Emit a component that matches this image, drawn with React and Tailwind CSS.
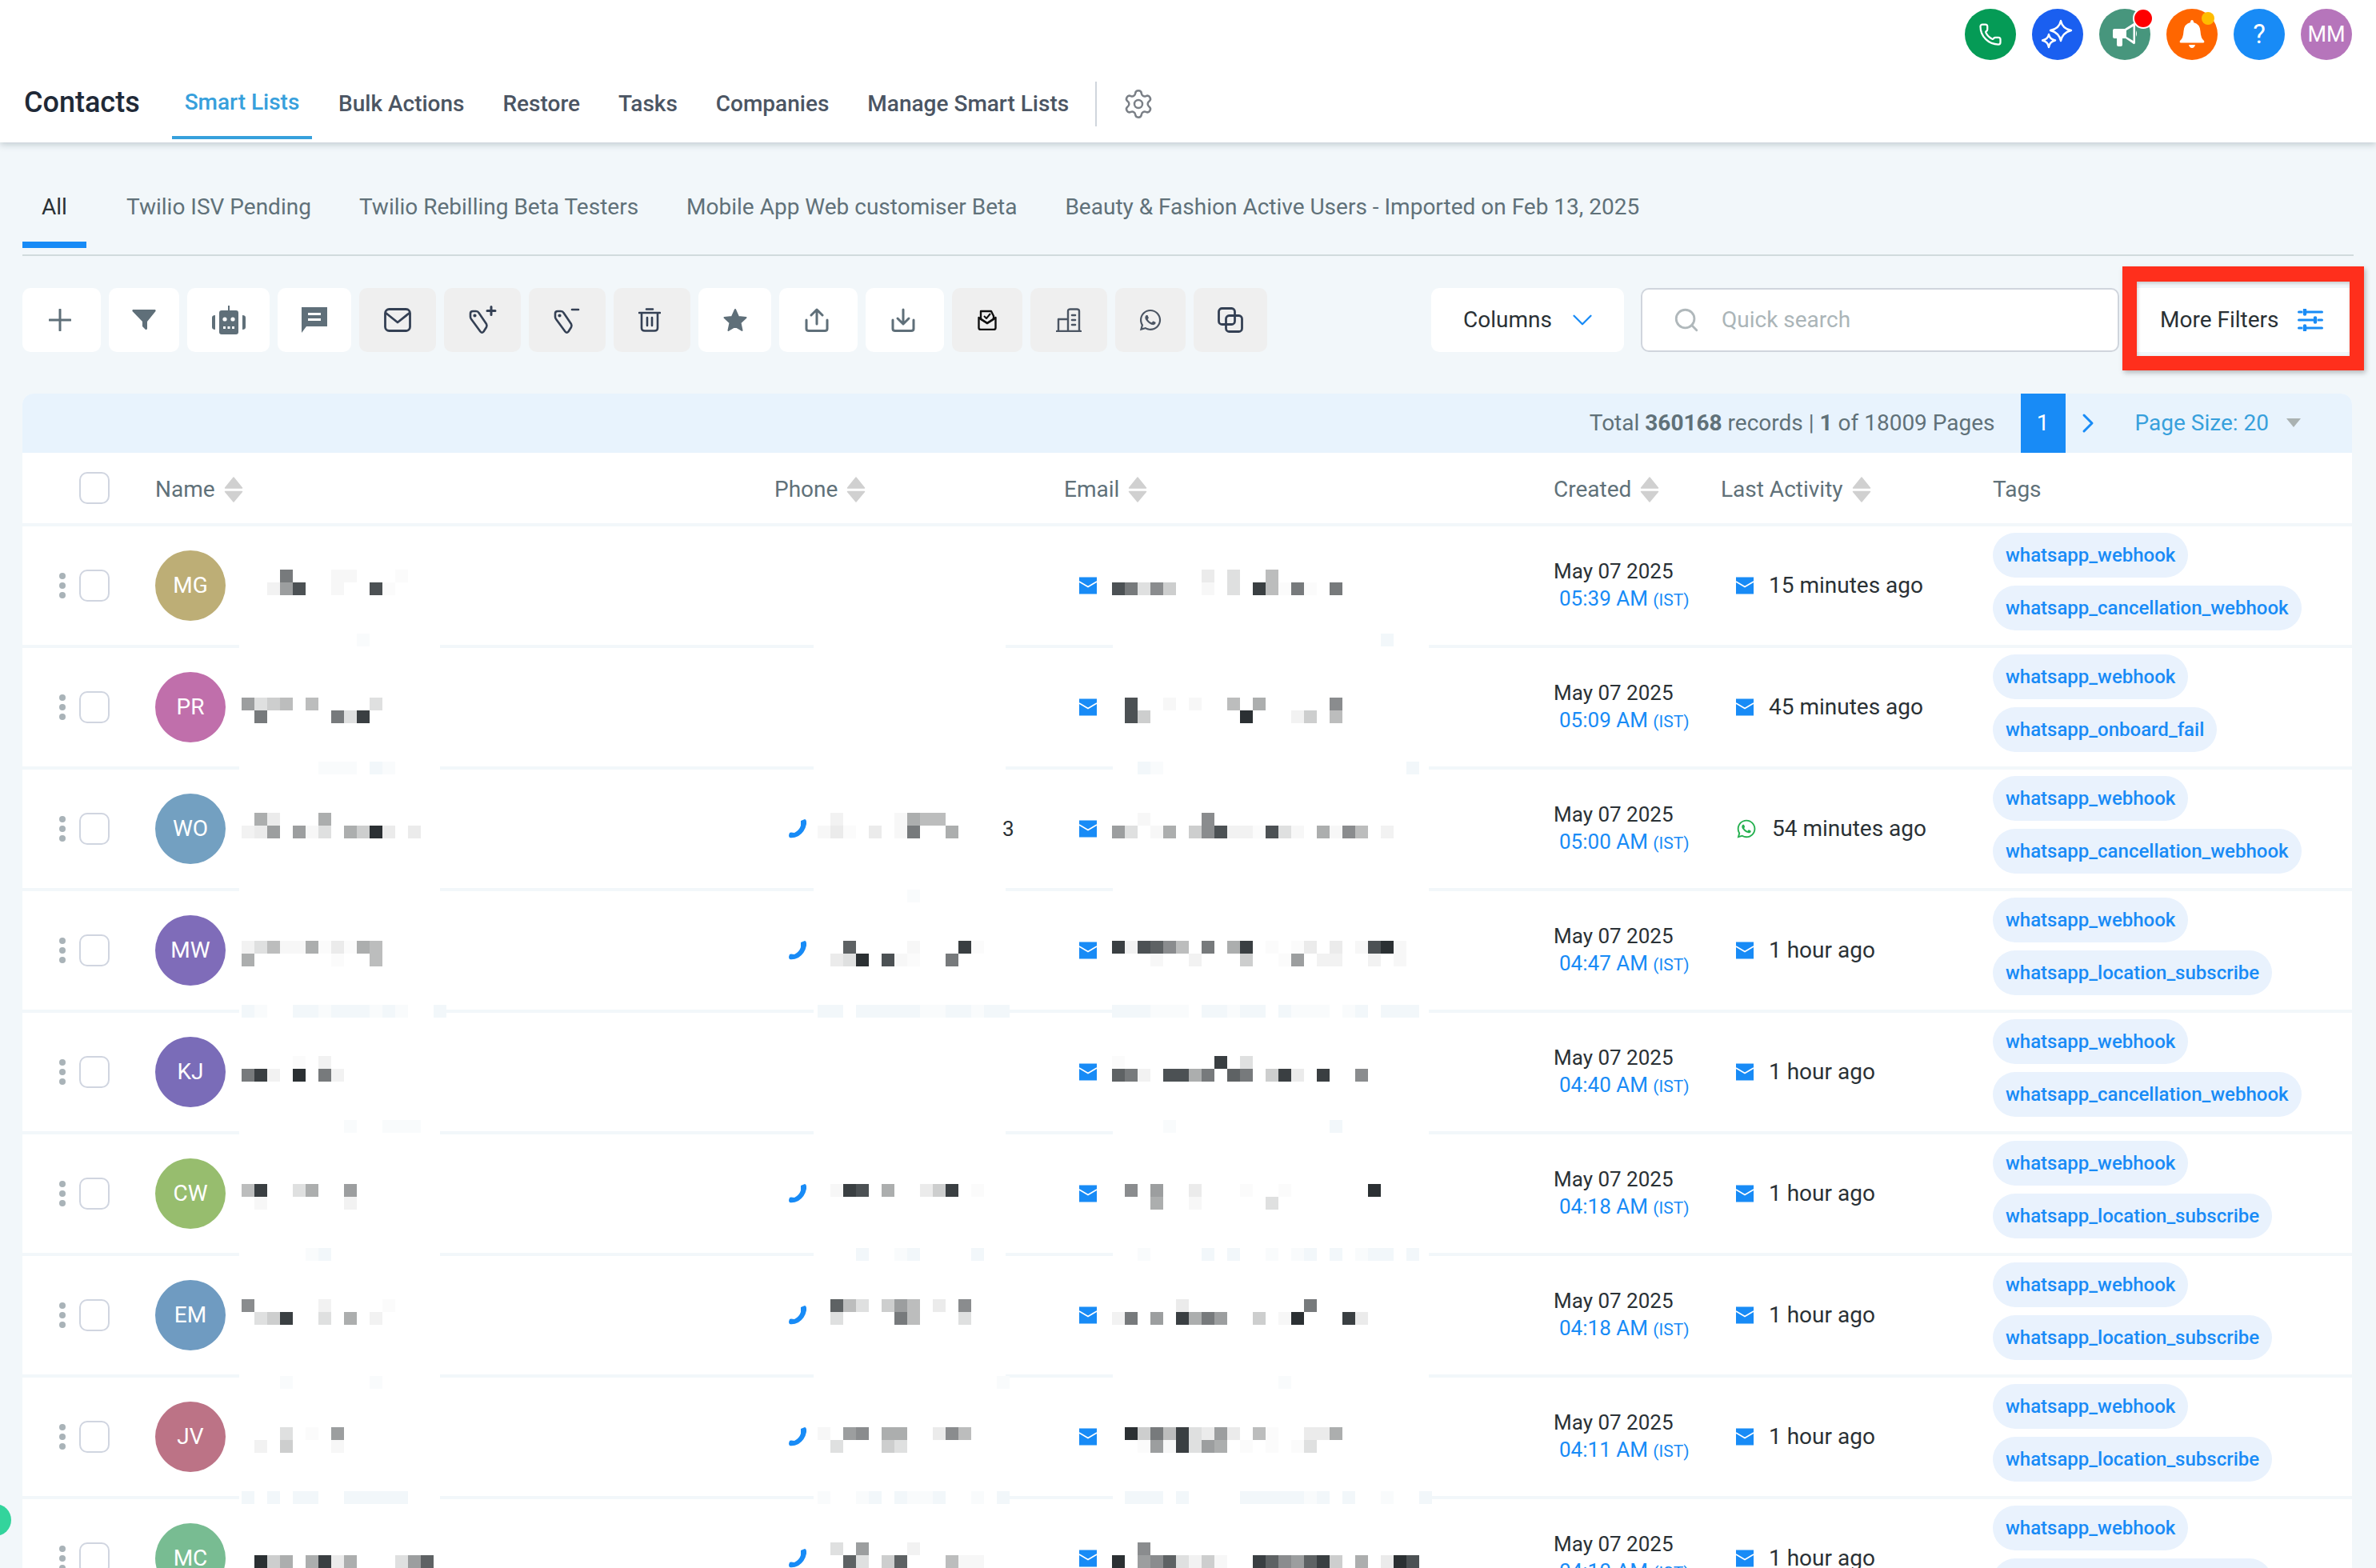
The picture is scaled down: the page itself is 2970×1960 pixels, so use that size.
import React from "react";
import { Phone, Settings, ChevronDown, ChevronRight, Search } from "lucide-react";
import { FaWhatsapp } from "react-icons/fa";

const G = { 0: "#2b3033", 1: "#3a3f42", 2: "#4c5154", 3: "#5e6264", 4: "#777a7c", 5: "#8a8c8e", 6: "#9c9e9f", 7: "#acaeae", 8: "#bcbdbd", 9: "#cdcece", a: "#dfe0e0", b: "#ebebeb", c: "#f2f2f2", d: "#f7f7f7", e: "#fbfbfb", s: "#f2f7fa", f: "#f9fbfc" };

function Cells({ line }) {
  return (
    <div className="flex h-4">
      {line.split("").map((c, i) => (
        <div key={i} className="w-4 h-4 shrink-0" style={{ background: G[c] || "transparent" }} />
      ))}
    </div>
  );
}

function Mosaic({ lines, odd }) {
  return (
    <div className={odd ? "flex flex-col -mt-2" : "flex flex-col mt-2"}>
      <Cells line={lines[0]} />
      <Cells line={lines[1]} />
    </div>
  );
}

const rows = [
  { i: "MG", c: "#bdae76", name: ["...4...dd...e", "..c62..d..2e"], email: [".......b.a..8", "24a59..d.a.18e4e.4"], d: "05:39 AM", a: "15 minutes ago", t: "whatsapp_cancellation_webhook" },
  { i: "PR", c: "#c06fab", name: ["6a98.8....a", ".4.....4a1"], email: [".2..d.d..8.7.....5", ".29.......0...c9.8"], d: "05:09 AM", a: "45 minutes ago", t: "whatsapp_onboard_fail" },
  { i: "WO", c: "#73a0c1", name: [".7b...7", "cb6.6da.790b.b"], phone: [".c....d788", "dbe.b.d4..7"], three: true, email: ["..d....5", "6a.d7.952cce2ad.7d58.c"], d: "05:00 AM", a: "54 minutes ago", wa: true, t: "whatsapp_cancellation_webhook" },
  { i: "MW", c: "#7f6cb9", name: ["ca8dd7ebe78", "7......e..8"], phone: ["..3....d...1e", ".ba0.2de..4"], email: ["1c2358.4.71.e.eb.b.d20d", "...d..c...9..e6.cc..c.d"], d: "04:47 AM", a: "1 hour ago", t: "whatsapp_location_subscribe" },
  { i: "KJ", c: "#7a6cb8", name: ["....e.c", "41c.0.4c"], email: ["e.......1.a", "34c.2274.34.91b.1..5"], d: "04:40 AM", a: "1 hour ago", t: "whatsapp_cancellation_webhook" },
  { i: "CW", c: "#97bd6e", name: ["81..a7..6", ".d......c"], phone: [".d12.7..b91.e", ""], email: [".5.6..b...e..e......0", "...7..d.....a"], d: "04:18 AM", a: "1 hour ago", t: "whatsapp_location_subscribe" },
  { i: "EM", c: "#6f9bc1", name: ["5.....c....e", ".a91..a.7.c"], phone: [".38a.968.b.5", ".a....48...a"], email: [".....b.........4", "c4.6.1746..9.d0...1b"], d: "04:18 AM", a: "1 hour ago", t: "whatsapp_location_subscribe" },
  { i: "JV", c: "#bc7386", name: ["...a.e.6", ".c.9...d"], phone: ["d.65.77..b58", ".a...9a"], email: [".09481ab6b.8e..bb7", "..e6d1a67.e.e.ea"], d: "04:11 AM", a: "1 hour ago", t: "whatsapp_location_subscribe" },
  { i: "MC", c: "#78bc92", name: ["", ".097.71b7...a63"], phone: [".a.6...c", "..3a.93...8dd"], email: ["..5", "0.653ac9d..1356319.7.b02"], d: "04:10 AM", a: "1 hour ago", t: "whatsapp_location_subscribe" },
];

const seams = [
  { top: -14, name: ".........f", phone: "", email: ".....................s" },
  { top: -6, name: "......fff.sf", phone: "", email: "..sf...................s" },
  { top: 2, name: "", phone: ".......f", email: "" },
  { top: -6, name: "sf..ssfsssfsf..s", phone: "ss.sssssffssfss", email: "sssfff.ssfss.sfff.fs.sss" },
  { top: -14, name: "........f..fff", phone: "", email: "....f............s" },
  { top: -6, name: ".....fs", phone: "...s..fs....s", email: "..f....s.s..f.fs.s.fss.s" },
  { top: 2, name: "...f......f", phone: "..............f", email: ".............f" },
  { top: -6, name: "s.s.ss..sssss", phone: "f..fs.sffs..f.s", email: ".sss.s....sssssfs.s..f..s" },
];

function Seam({ s }) {
  return (
    <div className="relative h-1 bg-[#f2f7fa]">
      <div className="absolute left-[271px] top-0 w-[251px] h-1 bg-white" />
      <div className="absolute left-[989px] top-0 w-[240px] h-1 bg-white" />
      <div className="absolute left-[1363px] top-0 w-[395px] h-1 bg-white" />
      <div className="absolute left-[274px]" style={{ top: s.top }}><Cells line={s.name} /></div>
      <div className="absolute left-[994px]" style={{ top: s.top }}><Cells line={s.phone} /></div>
      <div className="absolute left-[1362px]" style={{ top: s.top }}><Cells line={s.email} /></div>
    </div>
  );
}

function Sort() {
  return (
    <svg width="24" height="32" viewBox="0 0 24 32" className="shrink-0">
      <path d="M12 1 L22.5 14 H1.5 Z" fill="#d0d0d0" stroke="#d0d0d0" strokeWidth="1.5" strokeLinejoin="round" />
      <path d="M12 31 L22.5 18.5 H1.5 Z" fill="#d0d0d0" stroke="#d0d0d0" strokeWidth="1.5" strokeLinejoin="round" />
    </svg>
  );
}

function Check() {
  return <div className="w-[38px] h-10 rounded-[10px] border-2 border-[#d0d5e0] bg-white shrink-0" />;
}

function MailIcon() {
  return (
    <svg width="22" height="22" viewBox="0 0 22 22" className="shrink-0">
      <rect x="0" y="0.5" width="22" height="21" fill="#188bf6" />
      <path d="M0 6 L11 12.5 L22 6" fill="none" stroke="#fff" strokeWidth="1.6" />
    </svg>
  );
}

function PhoneSmall() {
  return (
    <svg width="22" height="24" viewBox="0 0 22 24" className="shrink-0">
      <path d="M15 2 L20 0 Q22.500 0 22 6 Q20 16 12 21 Q6 24 1 23 Q0 22 0 20 L1 17 Q2 16 7 17 Q13 14 15 8 Z" fill="#188bf6" />
    </svg>
  );
}

function Btn({ w, gray, children }) {
  return (
    <div className={(gray ? "bg-[#efefef] " : "bg-white ") + w + " h-20 rounded-[10px] flex items-center justify-center shrink-0"}>
      {children}
    </div>
  );
}

const Sl = "#5f6f79";
const Nv = "#344054";

function TagIcon({ plus }) {
  return (
    <svg width="36" height="36" viewBox="0 0 36 36" fill="none" stroke={Nv} strokeWidth="2.6" strokeLinecap="round" strokeLinejoin="round">
      <path d="M3 10 Q3 7 6 7 H10 Q12.500 7 13.500 9 L23 23 Q24 25 23 27 L19.500 32.500 Q17.500 35 15.500 32.500 L4.500 17.500 Q3 16 3 14 Z" />
      <circle cx="8.500" cy="12.500" r="0.8" fill={Nv} />
      {plus ? <path d="M29 1.500 V11.500 M24 6.500 H34" strokeWidth="3" /> : <path d="M24 5 H32" strokeWidth="2.6" />}
    </svg>
  );
}

const tabs = ["Twilio ISV Pending", "Twilio Rebilling Beta Testers", "Mobile App Web customiser Beta", "Beauty & Fashion Active Users - Imported on Feb 13, 2025"];

export default function App() {
  return (
    <div className="relative w-[2970px] h-[1960px] overflow-hidden bg-[#f2f7fa] font-[family-name:Roboto,sans-serif] text-[28px] text-[#2a3135]">
      <header className="h-[178px] bg-white shadow-[0_3px_8px_rgba(90,110,120,0.3)] relative">
        <div className="flex justify-end gap-5 pt-[11px] pr-[30px] h-[86px]">
          <div className="w-16 h-16 rounded-full bg-[#059b56] flex items-center justify-center">
            <Phone size={30} color="#fff" strokeWidth={1.8} />
          </div>
          <div className="w-16 h-16 rounded-full bg-[#1a5ff0] flex items-center justify-center">
            <svg width="40" height="40" viewBox="0 0 40 40" fill="none" stroke="#fff" strokeWidth="2.4" strokeLinejoin="round">
              <path d="M24 3 Q26 13 37 15 Q26 18 24 28 Q22 18 11 15 Q22 13 24 3 Z" />
              <path d="M9 20 Q10 26 17 27.500 Q10 29 9 36 Q8 29 1 27.500 Q8 26 9 20 Z" />
            </svg>
          </div>
          <div className="relative w-16 h-16 rounded-full bg-[#47967d] flex items-center justify-center">
            <svg width="32" height="32" viewBox="0 0 32 32" fill="#fff">
              <path d="M1 11 Q1 9 3 9 H16 L27 2 Q28 1.500 29 2 V27 Q28 28.500 27 28 L17 21 H13 V29 Q13 31 11 31 H8 Q6 31 6 29 V21 H3 Q1 21 1 19 Z M18 11 V19 L26.500 24 V6 Z" fillRule="evenodd" />
              <path d="M30 11 Q32 15 30 19 Z" />
            </svg>
            <div className="absolute left-[42px] top-0 w-[22px] h-[22px] rounded-full bg-[#ff0000] border-2 border-white box-content -mt-[1px]" />
          </div>
          <div className="relative w-16 h-16 rounded-full bg-[#ff6600] flex items-center justify-center">
            <svg width="32" height="36" viewBox="0 0 32 36" fill="#fff">
              <path d="M16 0 Q18 0 18 3 Q26 5 26.500 14 Q27 23 31 26 Q32 28 30 28.500 H2 Q0 28 1 26 Q5 23 5.500 14 Q6 5 14 3 Q14 0 16 0 Z" />
              <path d="M12 31 H20 Q19 35 16 35 Q13 35 12 31 Z" />
            </svg>
            <div className="absolute left-[44px] top-[4px] w-4 h-4 rounded-full bg-[#ffbc00]" />
          </div>
          <div className="w-16 h-16 rounded-full bg-[#188bf6] flex items-center justify-center text-white text-[33px]">?</div>
          <div className="w-16 h-16 rounded-full bg-[#b675bb] flex items-center justify-center text-white text-[27px]">MM</div>
        </div>
        <nav className="flex h-[92px] items-start pl-[30px]">
          <div className="text-[36px] leading-[44px] mt-5 font-medium text-[#1f2937] w-[144px]">Contacts</div>
          <div className="ml-[41px] w-[175px] h-[88px] border-b-4 border-[#37a0dc] text-center text-[#37a0dc] font-medium leading-8 pt-[26px]">Smart Lists</div>
          <div className="flex gap-12 ml-[33px] mt-[28px] leading-8 font-medium text-[#4b5563] whitespace-nowrap">
            <span>Bulk Actions</span>
            <span>Restore</span>
            <span>Tasks</span>
            <span>Companies</span>
            <span>Manage Smart Lists</span>
          </div>
          <div className="ml-[33px] mt-4 w-0.5 h-14 bg-[#d0d5dd]" />
          <Settings size={40} color="#7b8087" strokeWidth={1.5} className="ml-[32px] mt-[24px]" />
        </nav>
      </header>

      <div className="ml-7 w-[2914px] h-[142px] border-b-2 border-[#d1dbdd] flex items-start">
        <div className="w-20 h-[132px] border-b-8 border-[#188bf6] text-center pt-[65px] leading-8">All</div>
        <div className="flex gap-[60px] ml-[50px] pt-[65px] leading-8 text-[#607179] whitespace-nowrap">
          {tabs.map((t) => <span key={t}>{t}</span>)}
        </div>
      </div>

      <div className="flex mt-10 pl-7 pr-8 h-20">
        <div className="flex gap-2.5">
          <Btn w="w-[98px]">
            <svg width="28" height="28" viewBox="0 0 28 28" stroke={Sl} strokeWidth="3" strokeLinecap="round" className="mr-1"><path d="M14 1 V27 M1 14 H27" /></svg>
          </Btn>
          <Btn w="w-[88px]">
            <svg width="30" height="26" viewBox="0 0 30 26" fill={Sl}><path d="M1 0 H29 Q30 1 29.500 2 L19 15 V24 Q18 26 16.500 24.500 L13 21 V15 L.5 2 Q0 1 1 0 Z" /></svg>
          </Btn>
          <Btn w="w-[103px]">
            <svg width="42" height="36" viewBox="0 0 42 36" fill={Sl}>
              <path d="M20 0 H22 V6 H30 Q33 6 33 9 V33 Q33 36 30 36 H12 Q9 36 9 33 V9 Q9 6 12 6 H20 Z" />
              <path d="M0 15 Q0 12 4 12 V30 Q0 30 0 27 Z M42 15 Q42 12 38 12 V30 Q42 30 42 27 Z" />
              <circle cx="16" cy="17" r="2.600" fill="#fff" /><circle cx="26" cy="17" r="2.600" fill="#fff" />
              <rect x="14" y="26" width="3" height="3" fill="#fff" /><rect x="19.500" y="26" width="3" height="3" fill="#fff" /><rect x="25" y="26" width="3" height="3" fill="#fff" />
            </svg>
          </Btn>
          <Btn w="w-[92px]">
            <svg width="32" height="32" viewBox="0 0 32 32" fill={Sl}><path d="M0 0 H32 V24 H6 L0 32 Z" /><path d="M8 7 H24 V10 H8 Z M8 14 H24 V17 H8 Z" fill="#fff" /></svg>
          </Btn>
          <Btn w="w-[96px]" gray>
            <svg width="34" height="30" viewBox="0 0 34 30" fill="none" stroke={Nv} strokeWidth="2.8" strokeLinejoin="round"><rect x="1.500" y="1.500" width="31" height="27" rx="5" /><path d="M2 6 L17 18 L32 6" /></svg>
          </Btn>
          <Btn w="w-[96px]" gray><TagIcon plus /></Btn>
          <Btn w="w-[96px]" gray><TagIcon /></Btn>
          <Btn w="w-[96px]" gray>
            <svg width="28" height="30" viewBox="0 0 28 30" fill="none" stroke={Nv} strokeWidth="2.600" strokeLinecap="round" className="mr-1.5"><path d="M1 6 H27 M10 1.500 H18 M4 6 V25 Q4 28.500 8 28.500 H20 Q24 28.500 24 25 V6 M11 12 V22 M17 12 V22" /></svg>
          </Btn>
          <Btn w="w-[91px]">
            <svg width="30" height="30" viewBox="0 0 30 30" fill={Sl} stroke={Sl} strokeWidth="2" strokeLinejoin="round"><path d="M15 2 L19 11 L28.500 12 L21.500 18.500 L23.500 28 L15 23 L6.500 28 L8.500 18.500 L1.500 12 L11 11 Z" /></svg>
          </Btn>
          <Btn w="w-[98px]">
            <svg width="30" height="30" viewBox="0 0 30 30" fill="none" stroke={Sl} strokeWidth="3" strokeLinecap="round" strokeLinejoin="round" className="mr-1"><path d="M15 20 V2 M8 9 L15 2 L22 9" /><path d="M2 15 V26 Q2 28.500 5 28.500 H25 Q28 28.500 28 26 V15" /></svg>
          </Btn>
          <Btn w="w-[98px]">
            <svg width="30" height="30" viewBox="0 0 30 30" fill="none" stroke={Sl} strokeWidth="3" strokeLinecap="round" strokeLinejoin="round" className="mr-1"><path d="M15 2 V20 M8 13 L15 20 L22 13" /><path d="M2 15 V26 Q2 28.500 5 28.500 H25 Q28 28.500 28 26 V15" /></svg>
          </Btn>
          <Btn w="w-[88px]" gray>
            <svg width="24" height="26" viewBox="0 0 24 26" fill="none" stroke="#111" strokeWidth="2.400" strokeLinejoin="round">
              <path d="M4 12 V2 H17 L20 8 V12 L12 17 Z" /><path d="M1.500 10 V23 Q1.500 25 4 25 H20 Q22.500 25 22.500 23 V10 L12 17 Z" /><path d="M8 8 L11 11 L16 5" strokeWidth="2" />
            </svg>
          </Btn>
          <Btn w="w-[96px]" gray>
            <svg width="32" height="30" viewBox="0 0 32 30" fill="none" stroke="#4b5563" strokeWidth="2.400" strokeLinecap="round" strokeLinejoin="round"><path d="M1 29 H31 M3 29 V14 H15 M15 29 V4 Q15 1.500 18 1.500 H26 Q29 1.500 29 4 V29" /><path d="M20 9 H24 M20 15 H24 M20 21 H24" strokeWidth="2.600" /></svg>
          </Btn>
          <Btn w="w-[88px]" gray><FaWhatsapp size={30} color="#4b5563" /></Btn>
          <Btn w="w-[92px]" gray>
            <svg width="32" height="32" viewBox="0 0 32 32" fill="none" stroke={Nv} strokeWidth="2.800"><rect x="1.500" y="1.500" width="20" height="20" rx="4" /><rect x="10.500" y="10.500" width="20" height="20" rx="4" /></svg>
          </Btn>
        </div>
        <div className="flex ml-auto">
          <div className="w-[241px] h-20 bg-white rounded-[10px] flex items-center pl-10">
            Columns
            <ChevronDown size={42} color="#188bf6" strokeWidth={1.3} className="ml-[17px]" />
          </div>
          <div className="ml-[21px] w-[598px] h-20 bg-white rounded-[10px] border-2 border-[#d0d5dd] flex items-center pl-[38px] text-[#abb5b8]">
            <Search size={34} color="#b0b8bb" strokeWidth={2} />
            <span className="ml-[27px]">Quick search</span>
          </div>
          <div className="relative ml-[22px] w-[267px] h-20 bg-white flex items-center pl-[29px]">
            More Filters
            <svg width="32" height="28" viewBox="0 0 32 28" stroke="#188bf6" strokeWidth="3" strokeLinecap="round" className="ml-[24px]">
              <path d="M1.500 4 H5 M11 4 H30.500 M1.500 14 H19 M26 14 H30.500 M1.500 24 H5 M11 24 H30.500" />
              <path d="M9 1.500 V6.500 M22 11.500 V16.500 M9 21.500 V26.500" strokeWidth="4.500" />
            </svg>
            <div className="absolute -left-[18px] -right-[17px] -top-[27px] -bottom-[23px] border-x-[18px] border-t-[19px] border-b-[18px] border-[#ff2f1c] shadow-[2px_3px_6px_rgba(0,0,0,0.25),inset_1px_2px_4px_rgba(0,0,0,0.2)]" />
          </div>
        </div>
      </div>

      <section className="ml-7 w-[2912px] mt-[52px] bg-white rounded-t-[14px] overflow-hidden">
        <div className="h-[74px] bg-[#e8f3fd] flex items-center justify-end text-[#607179]">
          <span>Total <b className="font-bold">360168</b> records | <b className="font-bold">1</b> of 18009 Pages</span>
          <div className="ml-8 w-14 h-full bg-[#188bf6] text-white flex items-center justify-center">1</div>
          <ChevronRight size={40} color="#188bf6" strokeWidth={1.8} className="ml-2" />
          <span className="ml-[39px] text-[#37a0dc]">Page Size: 20</span>
          <svg width="18" height="12" viewBox="0 0 18 12" className="ml-[22px] mr-[64px]"><path d="M0 0 H18 L9 11 Z" fill="#aab2b2" /></svg>
        </div>
        <div className="h-[88px] flex items-center text-[#607179]">
          <div className="w-[166px] pl-[71px] shrink-0"><Check /></div>
          <div className="w-[774px] shrink-0 flex items-center gap-[11px] pt-[3px]"><span>Name</span><Sort /></div>
          <div className="w-[362px] shrink-0 flex items-center gap-[11px] pt-[3px]"><span>Phone</span><Sort /></div>
          <div className="w-[612px] shrink-0 flex items-center gap-[11px] pt-[3px]"><span>Email</span><Sort /></div>
          <div className="w-[209px] shrink-0 flex items-center gap-[11px] pt-[3px]"><span>Created</span><Sort /></div>
          <div className="w-[340px] shrink-0 flex items-center gap-[11px] pt-[3px]"><span>Last Activity</span><Sort /></div>
          <div className="pt-[3px]">Tags</div>
        </div>
        {rows.map((r, idx) => {
          const odd = idx % 2 === 0;
          return (
            <React.Fragment key={r.i}>
              <div className="h-1 bg-[#f2f7fa]" style={{ display: idx === 0 ? "block" : "none" }} />
              <div className="h-[148px] flex items-center">
                <div className="w-[166px] shrink-0 pl-[46px] flex items-center gap-[17px]">
                  <div className="flex flex-col gap-1 w-2">
                    <span className="w-2 h-2 rounded-full bg-[#a9b3b8]" />
                    <span className="w-2 h-2 rounded-full bg-[#a9b3b8]" />
                    <span className="w-2 h-2 rounded-full bg-[#a9b3b8]" />
                  </div>
                  <Check />
                </div>
                <div className="w-[774px] shrink-0 flex items-center gap-5">
                  <div className="w-[88px] h-[88px] rounded-full flex items-center justify-center text-white shrink-0" style={{ background: r.c }}>{r.i}</div>
                  <Mosaic lines={r.name} odd={odd} />
                </div>
                <div className="w-[362px] shrink-0 pl-[18px] flex items-center gap-[14px] relative">
                  {r.phone && <PhoneSmall />}
                  {r.phone && <Mosaic lines={r.phone} odd={odd} />}
                  {r.three && <span className="absolute left-[285px] text-[26px]">3</span>}
                </div>
                <div className="w-[612px] shrink-0 pl-[19px] flex items-center gap-[19px]">
                  <MailIcon />
                  <Mosaic lines={r.email} odd={odd} />
                </div>
                <div className="w-[209px] shrink-0 text-[26px] leading-[34px]">
                  <div>May 07 2025</div>
                  <div className="pl-[7px] text-[#188bf6] whitespace-nowrap">{r.d} <span className="text-[21px]">(IST)</span></div>
                </div>
                <div className="w-[340px] shrink-0 pl-[19px] flex items-center gap-[19px] whitespace-nowrap">
                  {r.wa ? <FaWhatsapp size={26} color="#25b04f" /> : <MailIcon />}
                  <span>{r.a}</span>
                </div>
                <div className="flex flex-col items-start gap-2.5 mb-[10px] text-[24px] text-[#188bf6] font-medium whitespace-nowrap">
                  <div className="h-14 px-4 rounded-[28px] bg-[#e9f2fd] flex items-center">whatsapp_webhook</div>
                  <div className="h-14 px-4 rounded-[28px] bg-[#e9f2fd] flex items-center">{r.t}</div>
                </div>
              </div>
              {seams[idx] && <Seam s={seams[idx]} />}
            </React.Fragment>
          );
        })}
      </section>
      <div className="absolute -left-[26px] top-[1880px] w-10 h-10 rounded-full bg-[#33d49c]" />
    </div>
  );
}
